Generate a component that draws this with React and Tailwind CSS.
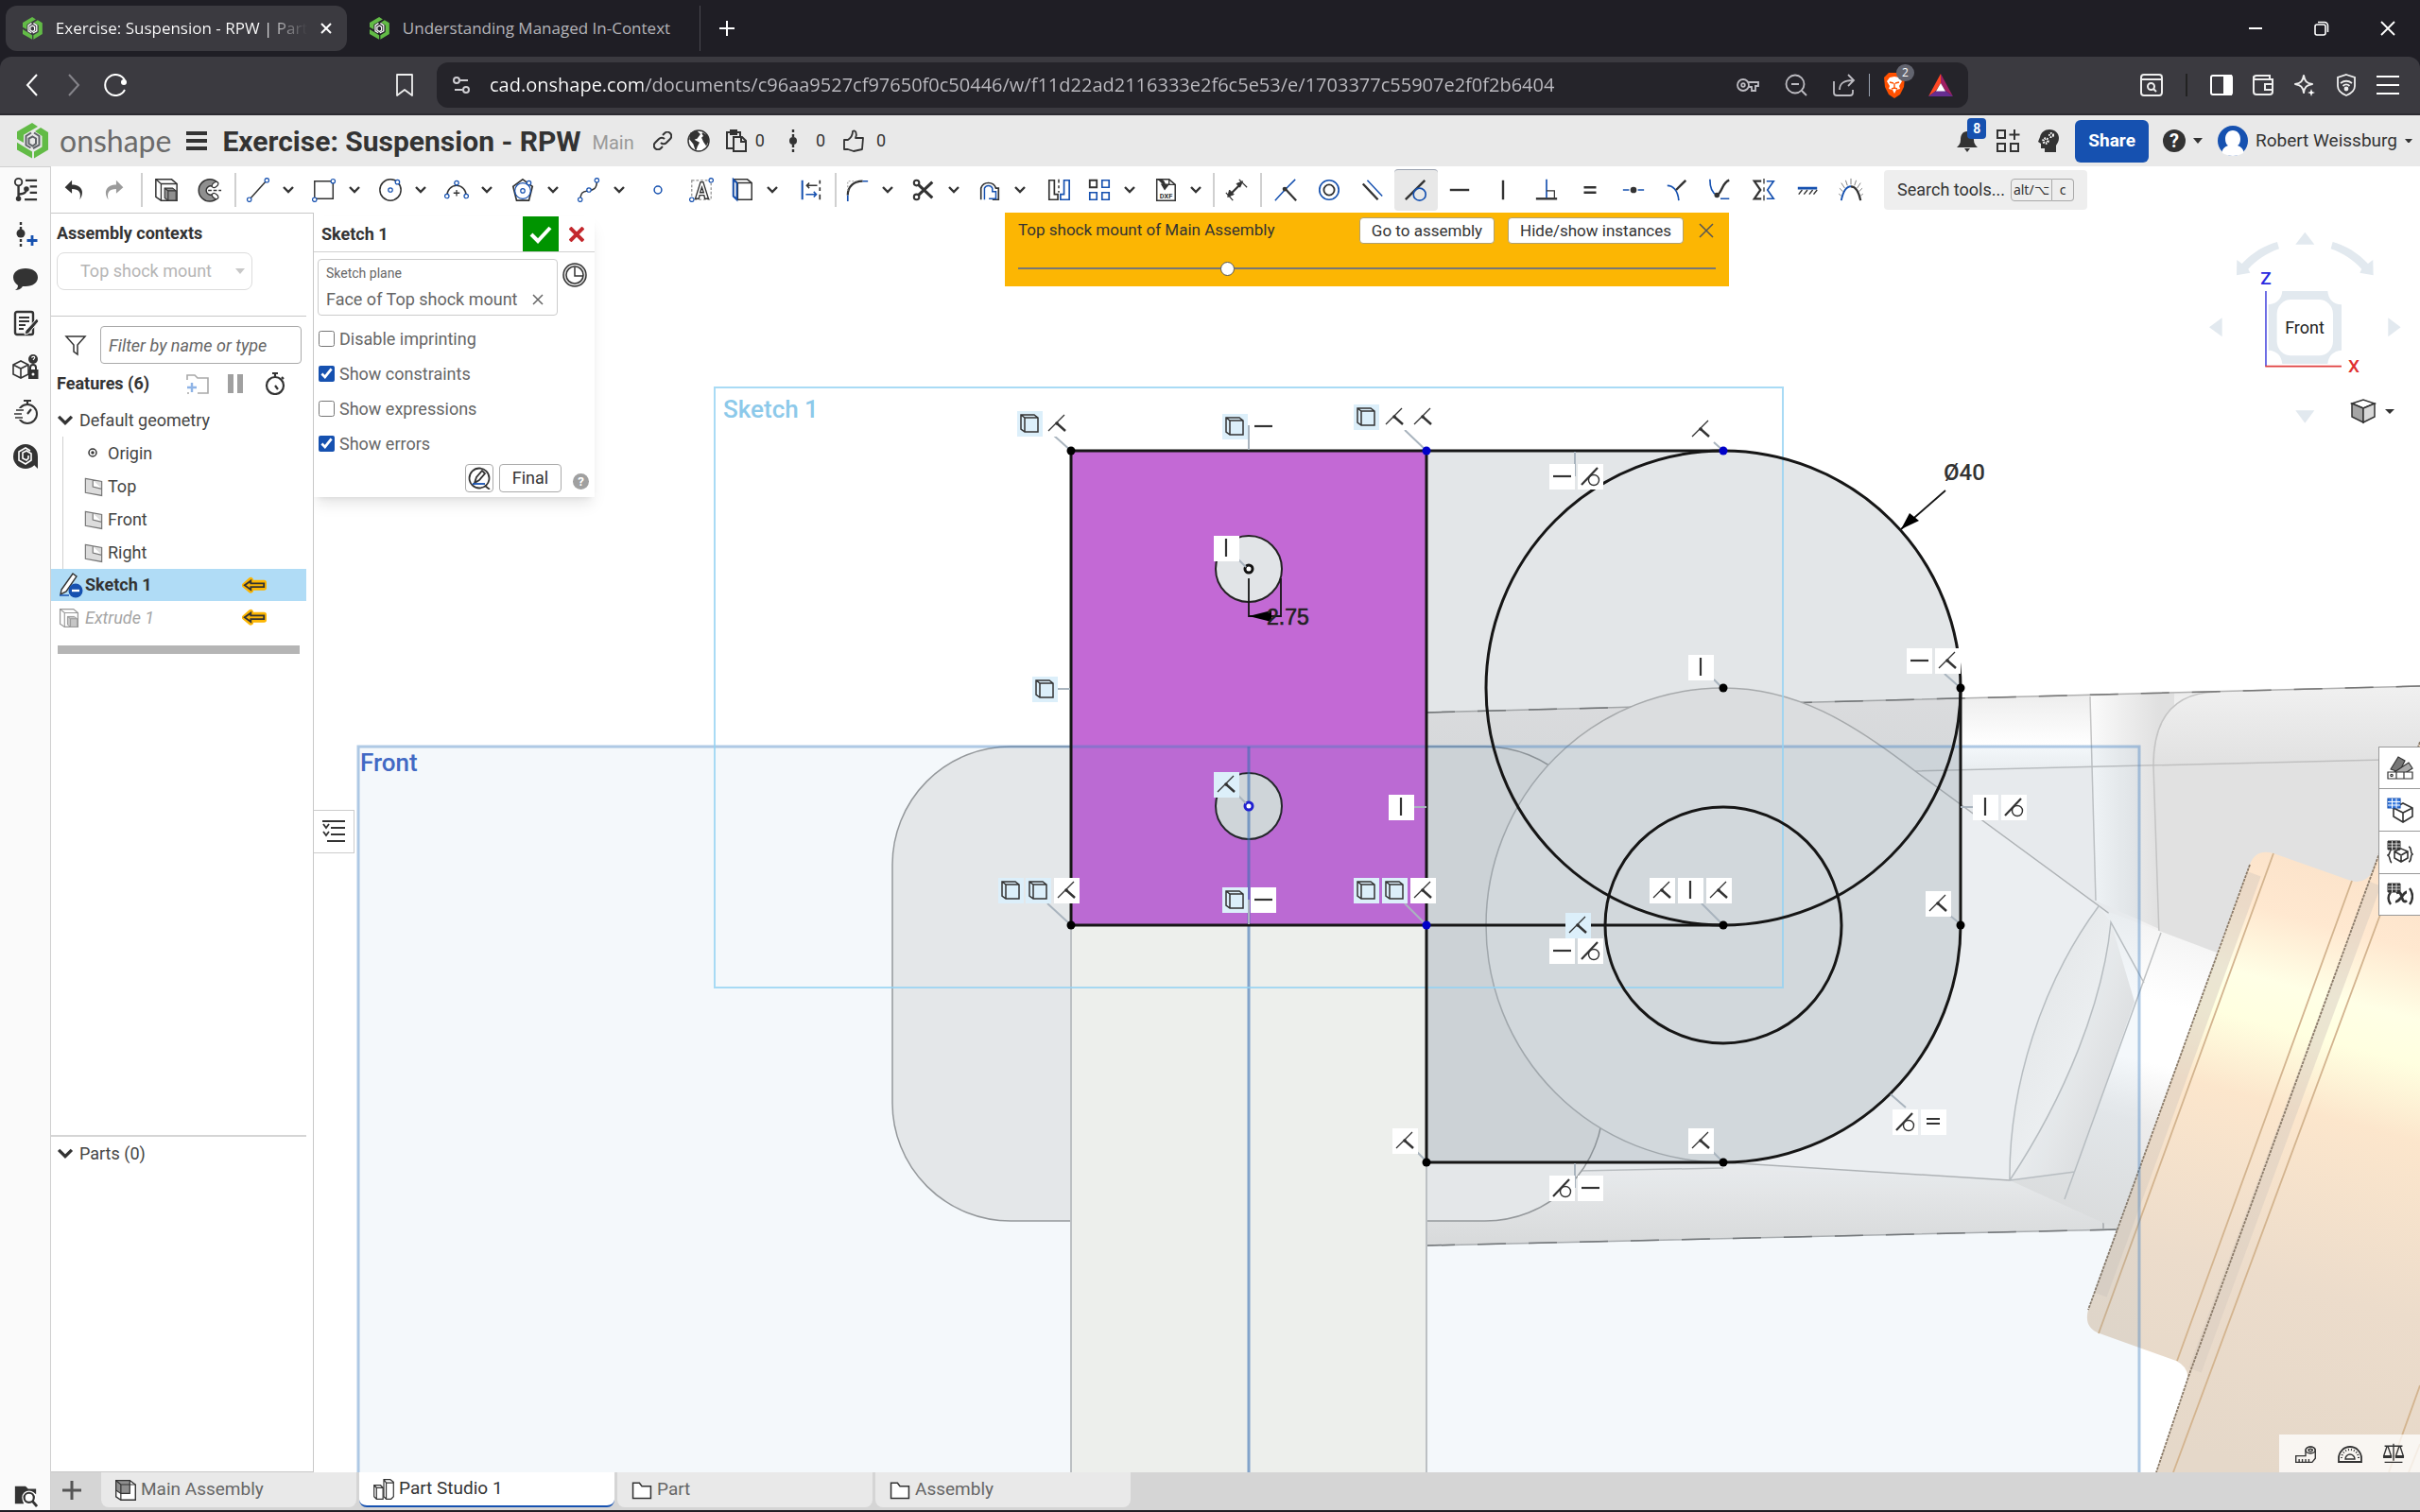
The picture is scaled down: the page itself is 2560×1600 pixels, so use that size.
const INK = '#333333';
const BLUE = '#1651b0';

/**
 * Icon frame: 28x28 drawing area shared by the toolbar and rail icons
 */
function Icon({ children, className = 'size-7', box = '0 0 28 28', color = INK, width = 2 }) {
  return (
    <svg viewBox={box} className={`${className} shrink-0`} fill="none" stroke={color} strokeWidth={width}>
      {children}
    </svg>
  );
}

/**
 * Onshape mark, used for favicons and the header logo
 */
function OnshapeMark({ className, inner = '#5f6368' }) {
  return (
    <svg viewBox="0 0 33 38" className={`${className} shrink-0`} fill="none">
      <path d="M16 0l6 4L7 12.700V21L0 17V9.300z" fill="#62bb46" />
      <path d="M0 20.700l16 9.800v7L0 28.500z" fill="#62bb46" />
      <path d="M19 9l6-4 8 5v18.500l-15 9v-7l8.500-5V14z" fill="#62bb46" />
      <path d="M15 10.500L9.500 14v9.500l5 3M18 10.500l5.500 3.500v9.500L17 27" stroke={inner} strokeWidth="2" />
      <path d="M16.500 14.500l3.500 2v5.500l-3.500 2.500-4-2.500v-5.500z" stroke={inner} strokeWidth="2" />
    </svg>
  );
}

const Chevron = ({ className = 'size-4' }) => (
  <Icon className={className} box="0 0 16 16" width={2.4}>
    <path d="M3 5l5 5 5-5" />
  </Icon>
);

const Caret = ({ className = 'w-2.5', color = INK }) => (
  <svg viewBox="0 0 10 6" className={`${className} shrink-0`} fill={color}>
    <path d="M0 0h10L5 6z" />
  </svg>
);

const Node = ({ x, y }) => <circle cx={x} cy={y} r="2.4" stroke={BLUE} strokeWidth="1.3" fill="#fff" />;

const ICONS = {
  list: (
    <>
      <circle cx="6" cy="5" r="4" />
      <path d="M6 9v15M6 19c6-1 9-1 9-7" strokeWidth="2.600" />
      <circle cx="6" cy="24" r="2" fill={INK} />
      <circle cx="15" cy="13" r="2" fill={INK} />
      <path d="M14 3h13M19 10h8M19 17h8M13 25h14" strokeWidth="2.400" />
    </>
  ),
  undo: <path d="M9 3L1 11l8 7v-5c8 0 11 4 9 12 6-9 2-17-9-17z" fill={INK} stroke="none" transform="translate(4 0)" />,
  redo: <path d="M19 3l8 8-8 7v-5c-8 0-11 4-9 12-6-9-2-17 9-17z" fill="#9b9b9b" stroke="none" transform="translate(-4 0)" />,
  extrude: (
    <>
      <path d="M2 2h18l6 5v19H8L2 22z" fill="#fff" strokeWidth="1.6" />
      <path d="M2 2l6 5h18M8 7v19" strokeWidth="1.4" />
      <path d="M12 12h9l4 3v11h-9l-4-3z" fill="#8f8f8f" strokeWidth="1.2" />
      <path d="M12 12l4 3h9M16 15v11" strokeWidth="1.2" />
    </>
  ),
  revolve: (
    <>
      <path d="M23 6a12.500 12.500 0 1 0 0 17l-6-4a5 5 0 1 1 0-9z" fill="#8f8f8f" strokeWidth="1.6" />
      <path d="M12 14.500h4M18 14.500h4M24 14.500h3" strokeWidth="1.6" />
      <ellipse cx="20" cy="8" rx="2.500" ry="4" transform="rotate(50 20 8)" fill="#fff" strokeWidth="1.3" />
      <ellipse cx="20" cy="21" rx="2.500" ry="4" transform="rotate(-50 20 21)" fill="#fff" strokeWidth="1.3" />
    </>
  ),
  line: (
    <>
      <path d="M5 24L23 4" strokeWidth="1.6" />
      <Node x={4} y={25} />
      <Node x={24} y={3} />
    </>
  ),
  rect: (
    <>
      <path d="M3 4h21v20H3z" strokeWidth="1.6" />
      <Node x={3} y={25} />
      <Node x={24} y={4} />
    </>
  ),
  circle: (
    <>
      <circle cx="14" cy="14" r="12" strokeWidth="1.6" />
      <Node x={14} y={14} />
      <Node x={22} y={5} />
    </>
  ),
  arc: (
    <>
      <path d="M3 21a11 12 0 0 1 22 0" strokeWidth="1.6" />
      <path d="M14 14v7M10.500 17.500h7" strokeWidth="1.4" />
      <Node x={3} y={21} />
      <Node x={14} y={6} />
      <Node x={25} y={21} />
    </>
  ),
  polygon: (
    <>
      <path d="M14 2l11 8-4 16H7L3 10z" strokeWidth="1.8" />
      <circle cx="14" cy="15" r="9" stroke={BLUE} strokeWidth="1.3" />
      <Node x={14} y={15} />
      <Node x={21} y={6} />
    </>
  ),
  spline: (
    <>
      <path d="M4 25c1-9 3-9 9-10s10-2 10-11" strokeWidth="1.6" />
      <Node x={4} y={25} />
      <Node x={14} y={14} />
      <Node x={23} y={3} />
    </>
  ),
  point: <circle cx="14" cy="14" r="4.200" stroke={BLUE} strokeWidth="1.6" />,
  text: (
    <>
      <path d="M3 3h22v22H3z" stroke="#8f8f8f" strokeWidth="1.3" strokeDasharray="3 2" />
      <path d="M13 5h3l6 19h-4l-1-4h-5l-1 4H7zM14.500 11l-2 6h4z" fill="#fff" strokeWidth="1.5" />
      <Node x={3} y={25} />
      <Node x={25} y={3} />
    </>
  ),
  project: (
    <>
      <path d="M4 2h16l5 4v19H9l-5-4z" strokeWidth="1.6" />
      <path d="M4 2l5 4h16M9 6v19" strokeWidth="1.6" />
      <path d="M4 2v19l4 4V6z" stroke={BLUE} strokeWidth="2" />
    </>
  ),
  construction: (
    <>
      <path d="M4 3v22" stroke={BLUE} strokeWidth="2.200" />
      <path d="M24 3v4M24 11v4M24 19v6" strokeWidth="1.8" />
      <path d="M9 9h12M12 6L9 9l3 3" strokeWidth="1.6" />
      <path d="M8 19h12M17 16l3 3-3 3" stroke={BLUE} strokeWidth="1.6" />
    </>
  ),
  fillet: (
    <>
      <path d="M3 20C3 10 10 4 20 4" strokeWidth="2.400" />
      <path d="M3 20v7M20 4h6" stroke={BLUE} strokeWidth="1.8" />
      <path d="M3 15V4h11" stroke="#9b9b9b" strokeWidth="1.2" strokeDasharray="2 2" />
    </>
  ),
  trim: (
    <>
      <circle cx="6" cy="6" r="3" strokeWidth="2.200" />
      <circle cx="6" cy="22" r="3" strokeWidth="2.200" />
      <path d="M8 8l16 15M8 20L24 5" strokeWidth="3.400" />
    </>
  ),
  offset: (
    <>
      <path d="M4 25V12a9 9 0 0 1 17 0h3v13h-7" strokeWidth="1.8" />
      <path d="M8 25V12a5 5 0 0 1 9 0v4h4v8h-8" stroke={BLUE} strokeWidth="1.6" />
    </>
  ),
  mirror: (
    <>
      <path d="M3 3h6v16h4v6H3z" strokeWidth="1.8" />
      <path d="M14 2v4M14 9v3M14 15v2" strokeWidth="1.6" />
      <path d="M26 3h-6v16h-4v6h10z" stroke={BLUE} strokeWidth="1.8" />
    </>
  ),
  pattern: (
    <>
      <path d="M3 3h8v8H3z" />
      <path d="M17 3h8v8h-8zM3 17h8v8H3zM17 17h8v8h-8z" stroke={BLUE} strokeWidth="1.8" />
    </>
  ),
  dxf: (
    <>
      <path d="M4 2h14l7 6v18H4z" strokeWidth="1.6" />
      <path d="M18 2v6h7" strokeWidth="1.4" />
      <path d="M5 2c6 0 8 2 8 8M10 8l3 5 4-5z" strokeWidth="1.800" fill={INK} />
      <text x="14.500" y="24" fontSize="8" fontWeight="700" textAnchor="middle" fill={INK} stroke="none">DXF</text>
    </>
  ),
  dimension: (
    <>
      <path d="M6 20L19 7" strokeWidth="2.400" />
      <path d="M21 4l-7 3 4 4zM4 22l2-8 5 5z" fill={INK} strokeWidth="1" />
      <path d="M17 2l9 9M2 17l8 9" strokeWidth="1.3" />
    </>
  ),
  coincident: (
    <>
      <path d="M2 26l11-12L25 2" stroke={BLUE} strokeWidth="1.6" />
      <path d="M13 12l13 14" strokeWidth="2.400" />
      <circle cx="13" cy="13" r="2.600" fill={INK} stroke="none" />
    </>
  ),
  concentric: (
    <>
      <circle cx="14" cy="14" r="11" stroke={BLUE} strokeWidth="1.8" />
      <circle cx="14" cy="14" r="6" />
    </>
  ),
  parallel: (
    <>
      <path d="M3 7l17 18" strokeWidth="2.600" />
      <path d="M8 3l17 18" stroke={BLUE} strokeWidth="1.6" />
    </>
  ),
  tangent: (
    <>
      <path d="M2 25L24 3" strokeWidth="2.600" />
      <circle cx="18" cy="19" r="7" stroke={BLUE} strokeWidth="1.8" />
    </>
  ),
  horizontal: <path d="M3 14h22" strokeWidth="2.600" />,
  vertical: <path d="M14 3v22" strokeWidth="2.600" />,
  perpendicular: (
    <>
      <path d="M2 24h24" strokeWidth="2.600" />
      <path d="M14 2v21" stroke={BLUE} strokeWidth="1.8" />
      <path d="M14 15h9v8" strokeWidth="1.300" />
    </>
  ),
  equal: <path d="M7 11h14M7 17h14" strokeWidth="2.600" />,
  midpoint: (
    <>
      <path d="M2 14h7M19 14h7" stroke={BLUE} strokeWidth="1.800" />
      <circle cx="14" cy="14" r="3.600" fill={INK} stroke="none" />
    </>
  ),
  normal: (
    <>
      <path d="M3 9c6 0 12 5 13 17" stroke={BLUE} strokeWidth="1.800" />
      <path d="M13 14L24 3" strokeWidth="2.600" />
    </>
  ),
  pierce: (
    <>
      <path d="M2 2c0 10 3 16 8 18M14 24h10" stroke={BLUE} strokeWidth="1.800" />
      <path d="M10 20c6-3 6-15 14-17" strokeWidth="2.600" />
      <circle cx="10" cy="20" r="3" fill={INK} stroke="none" />
    </>
  ),
  symmetric: (
    <>
      <path d="M11 4H3l7 10-7 10h8" strokeWidth="2.400" />
      <path d="M14 1v6M14 11v5M14 20v6" strokeWidth="1.400" />
      <path d="M17 4h8l-7 10 7 10h-8" stroke={BLUE} strokeWidth="1.800" />
    </>
  ),
  fix: (
    <>
      <path d="M3 12h22" stroke={BLUE} strokeWidth="3" />
      <path d="M8 14l-4 5M14 14l-4 5M20 14l-4 5M25 14l-4 5" strokeWidth="1.500" />
    </>
  ),
  curvature: (
    <>
      <path d="M3 26C5 16 9 10 14 10" stroke={BLUE} strokeWidth="2" />
      <path d="M14 10c5 0 9 6 11 16" strokeWidth="2.400" />
      <path d="M14 8V1M10 9L8 3M18 9l2-6M7 12L3 6M21 12l4-6M5 16l-4-4M23 16l4-4M3 21l-3-3M25 21l3-3" stroke="#777" strokeWidth="1" />
    </>
  ),
  versionAdd: (
    <>
      <path d="M9 1v3M9 6v3M9 19v3M9 24v3" strokeWidth="2.400" />
      <circle cx="9" cy="13" r="4.500" fill={INK} stroke="none" />
      <path d="M21 15v11M15.500 20.500h11" stroke={BLUE} strokeWidth="2.800" />
    </>
  ),
  comment: <path d="M14 3c8 0 13 4 13 9.500S22 22 14 22h-3c-2 3-5 4-8 4 2-1 3-3 3-5-3-2-5-5-5-8.500C1 7 6 3 14 3z" fill={INK} stroke="none" />,
  note: (
    <>
      <rect x="3" y="2" width="19" height="24" rx="2" strokeWidth="2.400" />
      <path d="M7 8h11M7 12h11M7 16h7M7 20h5" />
      <path d="M26 9L14 22l-1 4 4-1 11-13z" fill={INK} stroke="#fafafa" strokeWidth="1" />
    </>
  ),
  lockedPart: (
    <>
      <path d="M1 11l8-4 8 4v10l-8 4-8-4zM1 11l8 4 8-4M9 15v10" strokeWidth="1.600" />
      <circle cx="22" cy="5" r="5" fill={INK} stroke="none" />
      <path d="M20.500 3.500c1-2 4-1 3 .5l-1.500 2" stroke="#fff" strokeWidth="1.200" />
      <path d="M19 17v-3a3 3 0 0 1 6 0v3" />
      <path d="M17 16h10.500v10H17z" fill={INK} stroke="none" />
      <circle cx="22" cy="21" r="1.500" fill="#fff" stroke="none" />
    </>
  ),
  stopwatchFast: (
    <>
      <circle cx="16" cy="16" r="10" />
      <path d="M12 2h8M16 2v4M16 16l4-5" strokeWidth="2.200" />
      <path d="M2 12h10M0 16h10M2 20h10" stroke="#fafafa" strokeWidth="4" />
      <path d="M4 12h8M2 16h8M3 20h8" strokeWidth="1.300" />
    </>
  ),
  assistant: (
    <>
      <circle cx="14" cy="14" r="13" fill={INK} stroke="none" />
      <path d="M20 20l7 7V14z" fill={INK} stroke="none" />
      <path d="M19 8l-5-3-7 4v9l7 4 6-4v-7l-5-3-4 2v6l4 2 2-2v-3" stroke="#fff" strokeWidth="1.600" />
    </>
  ),
  searchTab: (
    <>
      <path d="M2 3h12l3 3h9v6a9 9 0 0 0-14 11H2z" fill={INK} stroke="none" />
      <circle cx="18" cy="16" r="6.500" fill="#fff" stroke="#fff" strokeWidth="3" />
      <circle cx="18" cy="16" r="5.500" strokeWidth="2.400" />
      <path d="M22 20l5 6" strokeWidth="3" />
    </>
  ),
  folder: <path d="M3 5h8l3 4h11v15H3z" strokeWidth="1.800" fill="#fff" />,
  assembly: (
    <>
      <path d="M2 2h17l7 5v19H8l-6-4z" fill="#fff" strokeWidth="1.600" />
      <path d="M2 2h17v16H8l-6-4z" fill="#8f8f8f" strokeWidth="1.400" />
      <path d="M2 2l6 5h18M8 7v19" strokeWidth="1.400" />
    </>
  ),
  partStudio: (
    <>
      <path d="M2 9h8l3 3v14H5l-3-3zM2 9l3 3h8M5 12v14" strokeWidth="1.400" />
      <path d="M14 2h8l4 3v18l-3 3h-6l-3-3zM14 2l3 4h9M17 6v20" strokeWidth="1.400" />
    </>
  ),
  plane: <path d="M3 3l22 4v19L3 22zM13 5v9l12 3" fill="#dcdcdc" stroke="#777" strokeWidth="1.500" />,
};

/* Sketch toolbar, in display order. menu = has a drop-down next to it */
const TOOL_GROUPS = [
  [
    { icon: 'line', label: 'Line', menu: true },
    { icon: 'rect', label: 'Rectangle', menu: true },
    { icon: 'circle', label: 'Circle', menu: true },
    { icon: 'arc', label: 'Arc', menu: true },
    { icon: 'polygon', label: 'Polygon', menu: true },
    { icon: 'spline', label: 'Spline', menu: true },
    { icon: 'point', label: 'Point' },
    { icon: 'text', label: 'Text' },
    { icon: 'project', label: 'Use', menu: true },
    { icon: 'construction', label: 'Construction' },
  ],
  [
    { icon: 'fillet', label: 'Fillet', menu: true },
    { icon: 'trim', label: 'Trim', menu: true },
    { icon: 'offset', label: 'Offset', menu: true },
    { icon: 'mirror', label: 'Mirror' },
    { icon: 'pattern', label: 'Pattern', menu: true },
    { icon: 'dxf', label: 'Insert DXF', menu: true },
  ],
  [{ icon: 'dimension', label: 'Dimension' }],
  [
    { icon: 'coincident', label: 'Coincident' },
    { icon: 'concentric', label: 'Concentric' },
    { icon: 'parallel', label: 'Parallel' },
    { icon: 'tangent', label: 'Tangent', active: true },
    { icon: 'horizontal', label: 'Horizontal' },
    { icon: 'vertical', label: 'Vertical' },
    { icon: 'perpendicular', label: 'Perpendicular' },
    { icon: 'equal', label: 'Equal' },
    { icon: 'midpoint', label: 'Midpoint' },
    { icon: 'normal', label: 'Normal' },
    { icon: 'pierce', label: 'Pierce' },
    { icon: 'symmetric', label: 'Symmetric' },
    { icon: 'fix', label: 'Fix' },
    { icon: 'curvature', label: 'Curvature' },
  ],
];

function ToolButton({ tool }) {
  return (
    <>
      <button
        aria-label={tool.label}
        className={`flex h-11 shrink-0 items-center justify-center rounded ${tool.menu ? 'w-10' : 'w-[46px]'} ${
          tool.active ? 'border-t border-gray-400 bg-[#e8e8e8]' : ''
        }`}
      >
        <Icon className="size-[26px]">{ICONS[tool.icon]}</Icon>
      </button>
      {tool.menu && (
        <button aria-label={`${tool.label} options`} className="flex h-11 w-[30px] shrink-0 items-center pl-1">
          <Chevron />
        </button>
      )}
    </>
  );
}

const Divider = ({ className = 'mx-0.5' }) => <div className={`${className} h-9 w-0.5 shrink-0 bg-[#d0d0d0]`} />;

/**
 * Browser window: tab strip
 */
function TabStrip() {
  return (
    <div className="flex h-[60px] items-center bg-[#1f1e25] pl-1.5 text-[17px] text-white">
      <button className="flex h-12 w-[361px] items-center rounded-xl bg-[#3b3a40] pr-3.5 pl-[18px]">
        <OnshapeMark className="h-6" inner="#ffffff" />
        <span className="ml-3.5 flex-1 bg-[linear-gradient(90deg,#fff_82%,#3b3a40)] bg-clip-text text-left whitespace-nowrap text-transparent">
          Exercise: Suspension - RPW | Part
        </span>
        <Icon className="ml-3 size-4" box="0 0 16 16" color="#fff">
          <path d="M3 3l10 10M13 3L3 13" />
        </Icon>
      </button>
      <button className="ml-6 flex h-12 w-[350px] items-center border-r border-[#4a4950]">
        <OnshapeMark className="h-6" inner="#ffffff" />
        <span className="mx-3.5 flex-1 text-left whitespace-nowrap text-[#b5b4b9]">
          Understanding Managed In-Context
        </span>
      </button>
      <button aria-label="New tab" className="ml-5">
        <Icon className="size-4" box="0 0 16 16" color="#fff">
          <path d="M8 0v16M0 8h16" />
        </Icon>
      </button>
      <div className="ml-auto flex items-center gap-[54px] pr-[26px]">
        <button aria-label="Minimize">
          <Icon className="size-4" box="0 0 16 16" color="#fff">
            <path d="M1 8h14" />
          </Icon>
        </button>
        <button aria-label="Restore">
          <Icon className="size-4" box="0 0 16 16" color="#fff" width={1.6}>
            <rect x="1" y="4" width="11" height="11" rx="2" />
            <path d="M4 1.500h7a3.500 3.500 0 0 1 3.500 3.500v7" />
          </Icon>
        </button>
        <button aria-label="Close window">
          <Icon className="size-4" box="0 0 16 16" color="#fff" width={1.8}>
            <path d="M1 1l14 14M15 1L1 15" />
          </Icon>
        </button>
      </div>
    </div>
  );
}

/**
 * Browser window: navigation and address
 */
function AddressBar() {
  return (
    <div className="bg-[#1f1e25]">
      <div className="flex h-[62px] items-center rounded-t-xl border-b-2 border-[#2c2b31] bg-[#3b3a40] pr-[22px] pl-[22px]">
        <button aria-label="Back">
          <Icon className="size-6" box="0 0 24 24" color="#fff">
            <path d="M17 1L7 12l10 11" />
          </Icon>
        </button>
        <button aria-label="Forward" className="ml-5">
          <Icon className="size-6" box="0 0 24 24" color="#85848a">
            <path d="M7 1l10 11L7 23" />
          </Icon>
        </button>
        <button aria-label="Reload" className="ml-5">
          <Icon className="size-6" box="0 0 24 24" color="#fff">
            <path d="M22 7A11 11 0 1 0 22 17" />
            <circle cx="21" cy="9" r="3" fill="#fff" stroke="none" />
          </Icon>
        </button>
        <button aria-label="Bookmark" className="ml-[282px]">
          <Icon className="size-6" box="0 0 24 24" color="#eee" width={1.800}>
            <path d="M4 1h16v22l-8-6-8 6z" strokeLinejoin="round" />
          </Icon>
        </button>
        <div className="ml-[22px] flex h-12 w-[1620px] shrink items-center rounded-xl bg-[#25242a] px-4 text-gray-300">
          <Icon className="size-5" box="0 0 20 20" color="#cfced3">
            <circle cx="5" cy="5" r="3" />
            <path d="M9 5h8M3 15h8" />
            <circle cx="15" cy="15" r="3" />
          </Icon>
          <input
            aria-label="Address"
            readOnly
            className="ml-5 min-w-0 flex-1 bg-[linear-gradient(90deg,#ffffff_162px,#bdbcc2_162px)] bg-clip-text font-['Open_Sans',sans-serif] text-[20px] text-transparent"
            value="cad.onshape.com/documents/c96aa9527cf97650f0c50446/w/f11d22ad2116333e2f6c5e53/e/1703377c55907e2f0f2b6404"
          />
          <div className="flex items-center gap-[27px]">
            <Icon className="size-6" box="0 0 24 24" color="#bdbcc2" width={1.800}>
              <circle cx="7" cy="12" r="6" />
              <circle cx="7" cy="12" r="1.800" />
              <path d="M12 9h11v4h-3v5h-4v-4h-4" />
            </Icon>
            <Icon className="size-6" box="0 0 24 24" color="#bdbcc2" width={1.800}>
              <circle cx="11" cy="11" r="9.500" />
              <path d="M18 18l5 5M7 11h8" />
            </Icon>
            <Icon className="size-6" box="0 0 24 24" color="#bdbcc2" width={1.800}>
              <path d="M1 8v12a3 3 0 0 0 3 3h14a3 3 0 0 0 3-3v-3" />
              <path d="M7 17C7 10 12 7 21 7M16 1l6 6-6 6" />
            </Icon>
          </div>
          <div className="mx-3.5 h-6 w-px bg-gray-400" />
          <div className="relative">
            <svg viewBox="0 0 24 28" className="h-7" fill="none">
              <path d="M6 1h12l5 5-1 10-4 8-6 4-6-4-4-8L1 6z" fill="#ff5000" />
              <path d="M7 6l5-1 5 1 3 4-3 5 1 3-4 1-2 4-2-4-4-1 1-3-3-5z" fill="#fff" />
              <path d="M7 11l4 1M17 11l-4 1M12 12v5M9 18l3-1 3 1" stroke="#ff5000" strokeWidth="1.400" />
            </svg>
            <span className="absolute -top-2 left-3.5 rounded-full bg-[#62646f] px-1.5 text-xs leading-[18px] text-white">2</span>
          </div>
          <svg viewBox="0 0 26 24" className="ml-6 h-6">
            <path d="M13 0v10L8 18 0 24z" fill="#ff4724" />
            <path d="M13 0l13 24-8-6-5-8z" fill="#9e1f63" />
            <path d="M0 24l8-6h10l8 6z" fill="#662d91" />
            <path d="M13 10l5 8.500H8z" fill="#fff" />
          </svg>
        </div>
        <div className="ml-auto flex items-center gap-5">
          <Icon className="size-6" box="0 0 24 24" color="#eee">
            <rect x="1" y="1" width="22" height="22" rx="3" />
            <path d="M1 6h22" />
            <circle cx="11.500" cy="13.500" r="3.500" />
            <path d="M14 16l3 3" />
          </Icon>
          <div className="mr-1 ml-1 h-6 w-0.5 bg-[#222]" />
          <Icon className="size-6" box="0 0 24 24" color="#fff">
            <rect x="1" y="2" width="22" height="20" rx="2" />
            <path d="M15 2h7v20h-7z" fill="#fff" />
          </Icon>
          <Icon className="size-6" box="0 0 24 24" color="#eee">
            <path d="M2 5a3 3 0 0 1 3-3h14v4M2 5v14a3 3 0 0 0 3 3h14a3 3 0 0 0 3-3V6H5a3 3 0 0 1-3-1zM22 11h-8v6h8" />
          </Icon>
          <Icon className="size-6" box="0 0 24 24" color="#eee">
            <path d="M11 2c1 6 3 8 9 9-6 1-8 3-9 9-1-6-3-8-9-9 6-1 8-3 9-9z" strokeLinejoin="round" />
            <path d="M19 16l1 3 3 1-3 1-1 3-1-3-3-1 3-1z" fill="#fff" stroke="none" />
          </Icon>
          <Icon className="size-6" box="0 0 24 24" color="#eee" width={1.800}>
            <path d="M12 1l9 3v9c0 5-4 8-9 10-5-2-9-5-9-10V4z" />
            <path d="M6 10c4-3 8-3 12 0M8.500 13c2-2 5-2 7 0" />
            <circle cx="12" cy="16" r="1.500" fill="#fff" />
          </Icon>
          <Icon className="size-6" box="0 0 24 24" color="#fff">
            <path d="M0 3h24M0 12h24M0 21h24" />
          </Icon>
        </div>
      </div>
    </div>
  );
}

/**
 * Document header
 */
function DocumentHeader() {
  return (
    <header className="flex h-[54px] items-center bg-[#e9e9e9] pr-2 pl-[18px] text-[#333]">
      <a href="#home" className="flex items-center">
        <OnshapeMark className="h-[38px]" />
        <span className="ml-3 font-[Lato,sans-serif] text-[32px] leading-9 text-[#6b6b6b]">onshape</span>
      </a>
      <button aria-label="Menu" className="ml-4">
        <Icon className="size-[22px]" box="0 0 22 22" width={4}>
          <path d="M0 3h22M0 11h22M0 19h22" />
        </Icon>
      </button>
      <h1 className="ml-4 text-[30px] font-bold">Exercise: Suspension - RPW</h1>
      <span className="mt-1 ml-3 text-[20px] text-[#999]">Main</span>
      <div className="ml-5 flex items-center text-lg">
        <Icon className="size-5" box="0 0 20 20">
          <path d="M8 12a4 4 0 0 0 6 0l4-4a4 4 0 0 0-6-6l-2 2M12 8a4 4 0 0 0-6 0l-4 4a4 4 0 0 0 6 6l2-2" />
        </Icon>
        <Icon className="ml-4 size-6" box="0 0 24 24" width={1.500}>
          <circle cx="12" cy="12" r="11" fill="#fff" />
          <path d="M4 4l6-2 3 3-3 4-3 1 1 2 4 2-2 4-1 3-2-6-4-5zM16 4l5 3 1 5-2 4-2-3-2-4 2-2z" fill={INK} />
        </Icon>
        <Icon className="ml-4 size-6" box="0 0 24 24">
          <path d="M8 20H2V3h14v4M6 1h6v4H6z" />
          <path d="M9 8h9l4 4v11H9zM17 8v5h5" />
        </Icon>
        <span className="ml-2">0</span>
        <Icon className="ml-[18px] size-6" box="0 0 24 24" width={2.400}>
          <path d="M12 0v3M12 5v3M12 16v3M12 21v3" />
          <circle cx="12" cy="12" r="4" fill={INK} stroke="none" />
        </Icon>
        <span className="ml-3">0</span>
        <Icon className="ml-[18px] size-6" box="0 0 24 24" width={1.800}>
          <path d="M2 11h4c3-2 5-5 5-9 3-2 5 2 3 7h8l-1 12-9 2-6-2H2z" strokeLinejoin="round" />
        </Icon>
        <span className="ml-3">0</span>
      </div>
      <div className="ml-auto flex items-center">
        <button aria-label="Notifications, 8 new" className="relative">
          <Icon className="size-6" box="0 0 24 24">
            <path d="M12 2c5 0 7 4 7 9 0 4 2 6 4 8H1c2-2 4-4 4-8 0-5 2-9 7-9zM9 20h6l-3 4z" fill={INK} stroke="none" />
          </Icon>
          <span className="absolute -top-3 left-3 rounded bg-[#1651b0] px-1.5 text-sm leading-[22px] font-bold text-white">8</span>
        </button>
        <button aria-label="App store" className="ml-[18px]">
          <Icon className="size-[26px]" box="0 0 26 26">
            <path d="M2 2h8v8H2zM2 16h8v8H2zM16 16h8v8h-8zM20 1v11M14.500 6.500h11" />
          </Icon>
        </button>
        <button aria-label="Learning center" className="ml-[18px]">
          <Icon className="size-6" box="0 0 24 24">
            <path d="M13 0c6 0 10 4 10 9 0 4-2 6-3 8v7H8v-4H4v-5l-3-2 2-5C4 3 8 0 13 0z" fill={INK} stroke="none" />
            <circle cx="9" cy="12" r="2.500" stroke="#fff" strokeDasharray="1.500 1" strokeWidth="2.500" />
            <circle cx="15" cy="6" r="2" stroke="#fff" strokeDasharray="1.500 1" />
          </Icon>
        </button>
        <button className="ml-4 h-[45px] rounded-md bg-[#1651b0] px-3.5 text-[19px] font-bold text-white">Share</button>
        <button aria-label="Help" className="ml-[15px] flex items-center gap-2">
          <svg viewBox="0 0 24 24" className="size-6">
            <circle cx="12" cy="12" r="12" fill={INK} />
            <text x="12" y="19" fontSize="20" fontWeight="700" textAnchor="middle" fill="#fff">?</text>
          </svg>
          <Caret />
        </button>
        <button className="ml-4 flex items-center gap-2 text-[19px]">
          <svg viewBox="0 0 32 32" className="size-8">
            <circle cx="16" cy="16" r="16" fill={BLUE} />
            <path d="M16 5c5 0 8 4 8 9 0 3-1 6-3 7 5 2 7 5 6 8-6 4-16 4-22 0-1-3 1-6 6-8-2-1-3-4-3-7 0-5 3-9 8-9z" fill="#fff" />
          </svg>
          Robert Weissburg
          <Caret className="w-2" />
        </button>
      </div>
    </header>
  );
}

function Toolbar() {
  return (
    <div className="flex h-[49px] items-center bg-white pl-px">
      <button aria-label="Undo" className="flex w-11 justify-center">
        <Icon className="size-[26px]">{ICONS.undo}</Icon>
      </button>
      <button aria-label="Redo" className="mr-0.5 flex w-[46px] justify-center">
        <Icon className="size-[26px]">{ICONS.redo}</Icon>
      </button>
      <Divider />
      <ToolButton tool={{ icon: 'extrude', label: 'Extrude' }} />
      <ToolButton tool={{ icon: 'revolve', label: 'Revolve' }} />
      {TOOL_GROUPS.map((group, idx) => (
        <div key={idx} className="flex items-center">
          <Divider className={idx === 0 ? 'mx-[3px]' : idx === 2 ? 'mx-0' : 'mx-0.5'} />
          {group.map((tool) => (
            <ToolButton key={tool.icon} tool={tool} />
          ))}
        </div>
      ))}
      <button className="ml-3 flex h-[42px] shrink-0 items-center rounded bg-[#eeeeee] px-3.5 text-lg text-[#333]">
        Search tools...
        <kbd className="ml-1.5 rounded-l-sm border border-[#aaa] px-0.5 font-sans text-sm leading-[22px]">alt/⌥</kbd>
        <kbd className="rounded-r-sm border border-l-0 border-[#aaa] px-2 font-sans text-sm leading-[22px]">c</kbd>
      </button>
    </div>
  );
}

const RAIL = [
  ['versionAdd', 'Create version'],
  ['comment', 'Comments'],
  ['note', 'Notes'],
  ['lockedPart', 'Part permissions'],
  ['stopwatchFast', 'Performance'],
  ['assistant', 'Assistant'],
];

function Rail() {
  return (
    <nav className="flex w-[54px] shrink-0 flex-col items-center border-t border-r border-[#d0d0d0] bg-[#fafafa]">
      <button aria-label="Feature list" className="flex h-[47px] items-center">
        <Icon className="size-[26px]">{ICONS.list}</Icon>
      </button>
      {RAIL.map(([icon, label]) => (
        <button key={icon} aria-label={label} className="flex h-[47px] items-center">
          <Icon>{ICONS[icon]}</Icon>
        </button>
      ))}
      <button aria-label="Tab manager" className="mt-auto mb-0.5">
        <Icon className="size-[26px]">{ICONS.searchTab}</Icon>
      </button>
    </nav>
  );
}

const ContextArrow = () => (
  <svg viewBox="0 0 28 20" className="mr-[42px] ml-auto w-[26px]">
    <path d="M3 10l7-6v3h15v6H10v3z" fill="#333" stroke="#fcb603" strokeWidth="6" strokeLinejoin="round" />
    <path d="M3 10l7-5v3h15v4H10v3z" fill="#fcb603" stroke="#333" strokeWidth="2" />
  </svg>
);

/**
 * Feature list of the part studio
 */
function FeaturePanel() {
  return (
    <aside className="flex w-[278px] shrink-0 flex-col border-t border-r border-b border-[#c8c8c8] bg-white text-lg text-[#444]">
      <h2 className="flex h-[41px] items-center pl-1.5 font-bold text-[#333]">Assembly contexts</h2>
      <div className="relative ml-1.5 w-[207px]">
        <select
          disabled
          aria-label="Assembly context"
          className="h-10 w-full appearance-none rounded-lg border border-[#dcdcdc] pl-6 text-[#b5b5b5] opacity-100"
        >
          <option>Top shock mount</option>
        </select>
        <Caret className="absolute top-[17px] right-2 w-2.5" color="#c8c8c8" />
      </div>
      <div className="mt-[27px] mr-[7px] h-px bg-[#c8c8c8]" />
      <div className="mt-2.5 flex items-center pr-3 pl-3.5">
        <Icon className="size-6" box="0 0 24 24" width={1.500}>
          <path d="M2 3h20l-8 9v10l-4-3v-7z" />
        </Icon>
        <input
          aria-label="Filter by name or type"
          placeholder="Filter by name or type"
          className="ml-3.5 h-10 min-w-0 flex-1 rounded border border-[#aaa] px-2 italic placeholder:text-[#666]"
        />
      </div>
      <div className="flex h-[42px] items-center pl-1.5">
        <h2 className="w-[137px] font-bold text-[#333]">Features (6)</h2>
        <button aria-label="Add folder">
          <Icon className="size-6" box="0 0 24 24" color="#a9a9a9" width={1.600}>
            <path d="M1 8V3h8l3 3h11v16H12M1 22h2" />
            <path d="M6 11v10M1 16h10" stroke="#8fb4e6" strokeWidth="2.400" />
          </Icon>
        </button>
        <button aria-label="Suspend" className="ml-5 flex gap-1">
          <span className="h-5 w-1.5 bg-[#a0a0a0]" />
          <span className="h-5 w-1.5 bg-[#a0a0a0]" />
        </button>
        <button aria-label="Regeneration times" className="ml-[22px]">
          <Icon className="size-6" box="0 0 24 24" width={2.200}>
            <circle cx="12" cy="14" r="9" />
            <path d="M9 1h6M12 1v4M12 14l3 4M19 5l2 2" />
          </Icon>
        </button>
      </div>
      <button className="flex h-[35px] items-center pl-1">
        <Chevron className="size-[22px]" />
        <span className="ml-1">Default geometry</span>
      </button>
      <ul className="ml-3 border-l border-[#d0d0d0]">
        <li className="flex h-[35px] items-center gap-1.5 pl-[21px]">
          <Icon className="size-5" box="0 0 20 20" width={1.500}>
            <circle cx="10" cy="9" r="4" />
            <circle cx="10" cy="9" r="1" />
          </Icon>
          Origin
        </li>
        {['Top', 'Front', 'Right'].map((name) => (
          <li key={name} className="flex h-[35px] items-center gap-1 pl-[21px]">
            <Icon className="size-[22px]">{ICONS.plane}</Icon>
            {name}
          </li>
        ))}
      </ul>
      <div className="mr-[7px] flex h-[34px] items-center bg-[#b0dcf6] pl-2 font-bold text-[#333]">
        <Icon className="h-7 w-[26px]" box="0 0 26 28">
          <path d="M3 19L15 2l4 3L8 21l-6 3z" fill="#fff" strokeWidth="1.400" />
          <path d="M1 25h10" stroke={BLUE} strokeWidth="1.500" />
          <circle cx="18" cy="20" r="7.500" fill={BLUE} stroke="none" />
          <path d="M14 20h8" stroke="#fff" strokeWidth="2.400" />
        </Icon>
        <span className="ml-0.5">Sketch 1</span>
        <ContextArrow />
      </div>
      <div className="mr-[7px] flex h-[35px] items-center pl-2 text-[#a5a5a5] italic">
        <Icon className="mr-1.5 size-[22px] opacity-50">{ICONS.extrude}</Icon>
        <span>Extrude 1</span>
        <ContextArrow />
      </div>
      <div className="mt-3 mr-3.5 ml-[7px] h-[9px] bg-[#b5b5b5]" />
      <div className="mt-auto mr-[7px] h-[356px] border-t-2 border-[#d5d5d5]">
        <button className="flex h-[35px] items-center pl-1">
          <Chevron className="size-[22px]" />
          <span className="ml-1">Parts (0)</span>
        </button>
      </div>
    </aside>
  );
}

const OPTIONS = [
  ['Disable imprinting', false],
  ['Show constraints', true],
  ['Show expressions', false],
  ['Show errors', true],
];

/**
 * Dialog of the open sketch
 */
function SketchDialog() {
  return (
    <section className="absolute top-1 left-0 w-[297px] bg-white text-lg text-[#666] shadow-lg">
      <div className="flex h-[38px] items-center border-b border-[#d0d0d0] pl-2">
        <h2 className="flex-1 font-bold text-[#333]">Sketch 1</h2>
        <button aria-label="Accept" className="flex h-[37px] w-[38px] items-center justify-center bg-[#009400]">
          <Icon className="size-6" box="0 0 24 24" color="#fff" width={4}>
            <path d="M2 12l7 7L22 5" />
          </Icon>
        </button>
        <button aria-label="Cancel" className="flex w-[38px] justify-center">
          <Icon className="size-4" box="0 0 16 16" color="#c4282d" width={4}>
            <path d="M1 1l14 14M15 1L1 15" />
          </Icon>
        </button>
      </div>
      <div className="flex items-start pt-[7px] pl-1">
        <div className="h-[60px] w-[254px] rounded-sm border border-[#ccc] pr-3.5 pl-2">
          <p className="pt-1 text-sm leading-5">Sketch plane</p>
          <p className="flex items-center justify-between pt-1.5 leading-6">
            Face of Top shock mount
            <button aria-label="Remove plane">
              <Icon className="size-3" box="0 0 12 12" color="#666" width={1.500}>
                <path d="M1 1l10 10M11 1L1 11" />
              </Icon>
            </button>
          </p>
        </div>
        <button aria-label="Sketch history" className="mt-1 ml-[5px]">
          <Icon className="size-[26px]" box="0 0 26 26" width={1.500}>
            <circle cx="13" cy="13" r="12" fill="#ddd" />
            <circle cx="13" cy="13" r="9" fill="#fff" />
            <path d="M13 5v9h9" />
          </Icon>
        </button>
      </div>
      <div className="pt-1.5 pl-[5px]">
        {OPTIONS.map(([label, checked]) => (
          <label key={label} className="flex h-[37px] items-center gap-[5px]">
            <input type="checkbox" defaultChecked={checked} className="size-[17px] accent-[#1651b0]" />
            {label}
          </label>
        ))}
      </div>
      <div className="flex h-[38px] items-start justify-end pt-[3px] pr-1.5">
        <button aria-label="Inspect sketch" className="rounded border border-[#aaa] p-0.5">
          <Icon className="size-6" box="0 0 24 24" width={1.800}>
            <circle cx="12" cy="12" r="10.500" />
            <path d="M7 17l2-6 6-7 3 3-6 7zM18 20l5 4" />
            <path d="M5 18h13" stroke={BLUE} />
          </Icon>
        </button>
        <button className="ml-1.5 h-[30px] w-[66px] rounded border border-[#aaa] text-[#333]">Final</button>
        <svg viewBox="0 0 18 18" className="mt-2.5 ml-3 size-[17px]">
          <circle cx="9" cy="9" r="9" fill="#a0a0a0" />
          <text x="9" y="14" fontSize="14" fontWeight="700" textAnchor="middle" fill="#fff">?</text>
        </svg>
      </div>
    </section>
  );
}

function ContextBanner() {
  return (
    <section className="absolute top-0 left-[731px] h-[78px] w-[766px] bg-[#fcb603] px-3.5 text-[17px] text-[#333]">
      <div className="flex h-[37px] items-center">
        <p className="flex-1">Top shock mount of Main Assembly</p>
        <button className="h-7 rounded border border-[#b0a070] bg-white px-3 leading-6">Go to assembly</button>
        <button className="ml-3.5 h-7 rounded border border-[#b0a070] bg-white px-3 leading-6">Hide/show instances</button>
        <button aria-label="Close" className="mr-0.5 ml-4">
          <Icon className="size-4" box="0 0 16 16" color="#555" width={1.500}>
            <path d="M1 1l14 14M15 1L1 15" />
          </Icon>
        </button>
      </div>
      <input
        type="range"
        aria-label="Context transparency"
        defaultValue="29.600"
        step="0.1"
        className="mt-3.5 block h-4 w-full appearance-none bg-[linear-gradient(#777,#777)] bg-[length:100%_2px] bg-center bg-no-repeat [&::-webkit-slider-thumb]:size-[15px] [&::-webkit-slider-thumb]:appearance-none [&::-webkit-slider-thumb]:rounded-full [&::-webkit-slider-thumb]:border [&::-webkit-slider-thumb]:border-[#555] [&::-webkit-slider-thumb]:bg-white"
      />
    </section>
  );
}

/* [type, x, y, background] of the constraint markers */
const MARKERS = [
  ['cube', 1089, 448, 'b'], ['coincident', 1118, 448, 'w'],
  ['cube', 1306, 451, 'b'], ['horizontal', 1336, 451, 'w'],
  ['cube', 1445, 441, 'b'], ['coincident', 1475, 441, 'w'], ['coincident', 1505, 441, 'w'],
  ['vertical', 1297, 580, 'w'],
  ['cube', 1105, 729, 'b'],
  ['coincident', 1297, 830, 'b'],
  ['vertical', 1482, 854, 'w'],
  ['cube', 1069, 942, 'b'], ['cube', 1098, 942, 'b'], ['coincident', 1128, 942, 'w'],
  ['cube', 1306, 952, 'b'], ['horizontal', 1336, 952, 'w'],
  ['cube', 1445, 942, 'b'], ['cube', 1475, 942, 'b'], ['coincident', 1505, 942, 'w'],
  ['horizontal', 1652, 504, 'w'], ['tangent', 1682, 504, 'w'],
  ['coincident', 1799, 454, 'w'],
  ['vertical', 1799, 706, 'w'],
  ['horizontal', 2030, 699, 'w'], ['coincident', 2060, 699, 'w'],
  ['vertical', 2100, 854, 'w'], ['tangent', 2130, 854, 'w'],
  ['coincident', 2050, 956, 'w'],
  ['tangent', 2015, 1187, 'w'], ['equal', 2045, 1187, 'w'],
  ['coincident', 1758, 942, 'w'], ['vertical', 1788, 942, 'w'], ['coincident', 1818, 942, 'w'],
  ['coincident', 1669, 979, 'b'],
  ['horizontal', 1652, 1006, 'w'], ['tangent', 1682, 1006, 'w'],
  ['coincident', 1486, 1207, 'w'],
  ['coincident', 1799, 1207, 'w'],
  ['tangent', 1652, 1257, 'w'], ['horizontal', 1682, 1257, 'w'],
];

const MARKER_SHAPES = {
  cube: <path d="M-9-9H5l4 3V9H-5L-9 6zM-9-9l4 3H9M-5-6V9" strokeWidth="1.500" />,
  coincident: (
    <>
      <path d="M-9 8L8-9" strokeWidth="1.300" />
      <path d="M0 0l9 8" strokeWidth="2.400" />
      <circle r="1.800" fill={INK} stroke="none" />
    </>
  ),
  horizontal: <path d="M-9 0H10" strokeWidth="2.200" />,
  vertical: <path d="M0-10V9" strokeWidth="2.200" />,
  equal: <path d="M-7-3H7M-7 2H7" strokeWidth="2.200" />,
  tangent: (
    <>
      <path d="M-9 9L8-9" strokeWidth="2.200" />
      <circle cx="4" cy="4" r="5.500" strokeWidth="1.400" />
    </>
  ),
};

const POINTS = [
  [1133, 477, '#000'], [1509, 477, '#0000c8'], [1823, 477, '#0000c8'],
  [1823, 728, '#000'], [2074, 728, '#000'], [2074, 979, '#000'],
  [1133, 979, '#000'], [1509, 979, '#0000c8'], [1823, 979, '#000'],
  [1509, 1230, '#000'], [1823, 1230, '#000'],
];

/**
 * 3D view: suspension parts behind, open sketch on top
 */
function Viewport() {
  return (
    <svg viewBox="332 225 2228 1333" preserveAspectRatio="xMinYMin slice" className="absolute inset-0 size-full" fill="none">
      <defs>
        <linearGradient id="band" gradientUnits="userSpaceOnUse" x1="0" y1="735" x2="0" y2="830">
          <stop offset="0" stopColor="#ededed" />
          <stop offset="0.55" stopColor="#ffffff" />
          <stop offset="1" stopColor="#eeeeee" />
        </linearGradient>
        <linearGradient id="bandLeft" gradientUnits="userSpaceOnUse" x1="0" y1="745" x2="0" y2="830">
          <stop offset="0" stopColor="#f4f2f2" />
          <stop offset="1" stopColor="#eeeeee" />
        </linearGradient>
        <linearGradient id="corner" gradientUnits="userSpaceOnUse" x1="0" y1="728" x2="0" y2="810">
          <stop offset="0" stopColor="#f0f0f0" />
          <stop offset="1" stopColor="#e1e1e1" />
        </linearGradient>
        <linearGradient id="side" gradientUnits="userSpaceOnUse" x1="2210" y1="0" x2="2284" y2="0">
          <stop offset="0" stopColor="#fbfbfb" />
          <stop offset="1" stopColor="#e0e0e0" />
        </linearGradient>
        <linearGradient id="under" gradientUnits="userSpaceOnUse" x1="0" y1="1240" x2="0" y2="1315">
          <stop offset="0" stopColor="#f2f0ef" />
          <stop offset="1" stopColor="#e2e0de" />
        </linearGradient>
        <linearGradient id="neck" gradientUnits="userSpaceOnUse" x1="2290" y1="980" x2="2215" y2="1290">
          <stop offset="0" stopColor="#f4f4f4" />
          <stop offset="0.25" stopColor="#ffffff" />
          <stop offset="0.45" stopColor="#ffffff" />
          <stop offset="0.65" stopColor="#ececec" />
          <stop offset="1" stopColor="#e4e2e0" />
        </linearGradient>
        <linearGradient id="lens" gradientUnits="userSpaceOnUse" x1="2140" y1="1080" x2="2215" y2="1115">
          <stop offset="0" stopColor="#f0efee" />
          <stop offset="1" stopColor="#f8f7f6" />
        </linearGradient>
        <linearGradient id="fold" gradientUnits="userSpaceOnUse" x1="2170" y1="1130" x2="2250" y2="1160">
          <stop offset="0" stopColor="#f4f3f2" />
          <stop offset="1" stopColor="#e2e0df" />
        </linearGradient>
        <linearGradient id="cap" gradientUnits="userSpaceOnUse" x1="2430" y1="890" x2="2261" y2="1520">
          <stop offset="0" stopColor="#fbe2c9" />
          <stop offset="0.12" stopColor="#ffe8d0" />
          <stop offset="0.23" stopColor="#ffffe6" />
          <stop offset="0.3" stopColor="#ffffe0" />
          <stop offset="0.42" stopColor="#fce6cc" />
          <stop offset="0.7" stopColor="#ecdccb" />
          <stop offset="1" stopColor="#e5d8c9" />
        </linearGradient>
      </defs>

      {/* Arm */}
      <path d="M1509 754L2560 726V1300L2240 1301 1509 1318z" fill="#f2f1f1" />
      <path d="M1509 754L2560 726V803L1509 830z" fill="url(#band)" />
      <path d="M1509 754L2074 739V816L1509 830z" fill="url(#bandLeft)" />
      <path d="M2211 737L2300 733V990L2217 953z" fill="url(#side)" />
      <path d="M2284 1000L2278 810C2278 760 2300 733 2345 732L2560 726V1300H2300z" fill="url(#corner)" />
      <path d="M1509 1245L1823 1236 2126 1249 2250 1280 2240 1301 1509 1318z" fill="url(#under)" />
      <path d="M2211 737L2217 953M2284 990L2278 810C2278 760 2300 733 2345 732" stroke="#c4c4c4" strokeWidth="1.500" />
      <path d="M2026 816L2560 803M1670 1239L1823 1236" stroke="#c0c0c0" strokeWidth="1.500" />
      <path d="M1509 754L2560 726M1509 1318L2240 1301" stroke="#b0b0b0" strokeWidth="1.500" />
      <path d="M1509 754L2560 726M1509 1318L2240 1301" stroke="#777" strokeWidth="1.500" strokeDasharray="30 24" />
      <path d="M2225 1286v15" stroke="#aaa" strokeWidth="1.500" />

      {/* Cross tube */}
      <rect x="944" y="790" width="752" height="502" rx="125" fill="#eeedec" stroke="#9a9a9a" strokeWidth="1.500" />

      {/* Shock mount */}
      <path
        d="M1823 728A251 251 0 0 0 1572 979A251 251 0 0 0 1823 1230L2126 1249L2233 968L2026 816C1960 765 1900 728 1823 728z"
        fill="#f6f5f5"
        stroke="#b5b5b5"
        strokeWidth="1.500"
      />
      <path d="M2231 965L2345 1008 2240 1301 2126 1249z" fill="url(#neck)" />
      <path d="M2126 1249C2125 1150 2160 1040 2220 959L2233 976C2228 1060 2185 1160 2126 1249z" fill="url(#lens)" />
      <path d="M2126 1249C2185 1160 2222 1060 2233 976L2258 1060 2195 1240z" fill="url(#fold)" />
      <path d="M2126 1249C2125 1150 2160 1040 2220 959M2126 1249C2185 1160 2225 1060 2233 976L2268 1040M2286 987L2184 1269M2126 1249L2195 1240" stroke="#bfc1c2" strokeWidth="1.500" />

      {/* Spring and its cap */}
      <path
        d="M2380 915Q2386 898 2405 903L2487 932Q2502 936 2510 922L2560 785V1558H2281L2313 1464Q2318 1448 2302 1440L2221 1411Q2204 1405 2209 1386z"
        fill="url(#cap)"
      />
      <path d="M2385 925L2222 1370M2512 935L2322 1450" stroke="#d8cbbf" strokeWidth="14" opacity="0.500" />
      <path d="M2405 903L2220 1411M2488 932L2303 1440M2532 930L2299 1558M2560 1466L2527 1558M2560 1528L2548 1558" stroke="#d3b48f" strokeWidth="1.800" />
      <path d="M2380 915L2209 1386M2560 785L2315 1457L2281 1558" stroke="#8a7a68" strokeWidth="1.800" strokeDasharray="3 1" />

      {/* Upright */}
      <rect x="1133" y="790" width="376" height="768" fill="#f8f6f0" />
      <path d="M1133 979v579M1509 1230v328" stroke="#c4c4c4" strokeWidth="2" />

      {/* Sketch region */}
      <path d="M1509 477H1823A251 251 0 0 1 2074 728V979A251 251 0 0 1 1823 1230H1509z" fill="#64737f" opacity="0.180" />
      <rect x="1133" y="477" width="376" height="502" fill="#c369d5" />
      <circle cx="1321" cy="602" r="35" fill="#e1e4e7" stroke="#222" strokeWidth="2" />
      <circle cx="1321" cy="853" r="35" fill="#d8dadb" stroke="#222" strokeWidth="2" />

      {/* Front plane */}
      <path d="M379 1560V790H2263V1560z" fill="#488abc" fillOpacity="0.060" />
      <path d="M379 1560V790H2263V1560" stroke="#3f7cc0" strokeOpacity="0.400" strokeWidth="3" />
      <path d="M1321 790V1558" stroke="#3a6fb4" strokeOpacity="0.600" strokeWidth="3" />
      <rect x="756" y="410" width="1130" height="635" stroke="#93d2f3" strokeOpacity="0.800" strokeWidth="2" />

      {/* Sketch geometry */}
      <g stroke="#161616" strokeWidth="3">
        <path d="M1133 979V477H1823M1509 477V1230H1823M1133 979H1823M2074 728V979A251 251 0 0 1 1823 1230" />
        <circle cx="1823" cy="728" r="251" />
        <circle cx="1823" cy="979" r="125" />
      </g>
      <circle cx="1321" cy="602" r="4" fill="#fff" stroke="#111" strokeWidth="3" />
      <circle cx="1321" cy="853" r="4" fill="#fff" stroke="#2020d0" strokeWidth="3" />

      {/* Dimensions */}
      <path d="M1321 612v41M1355 612v41M1321 652h34M2058 519l-47 41" stroke="#161616" strokeWidth="1.800" />
      <path d="M1321 652l24-6v12zM2011 560l9-17 10 8z" fill="#000" />
      <text x="1340" y="661" fontSize="23" fill="#222" stroke="#222" strokeWidth="0.6" fontFamily="Liberation Sans, sans-serif">2.75</text>
      <text x="2056" y="508" fontSize="24" fontWeight="500" fill="#333" fontFamily="Roboto, sans-serif">Ø40</text>

      {/* Leader lines from markers to geometry */}
      <path
        d="M1115 461l18 16M1321 450v26M1486 455l23 22M1310 592l8 8M1118 729h14M1310 842l8 8M1496 854h13M1108 956l25 23M1321 952v26M1486 956l23 23M1666 478v26M1813 468l10 9M1813 719l9 9M2057 713l17 15M2074 854h13M2063 969l11 9M2000 1158l16 14M1499 1219l10 10M1812 1219l10 10M1666 1231v26M1800 956l22 22"
        stroke="#a9b4be"
        strokeWidth="2"
      />
      {POINTS.map(([x, y, fill]) => (
        <circle key={`${x}-${y}`} cx={x} cy={y} r="4.500" fill={fill} />
      ))}
      {MARKERS.map(([type, x, y, bg]) => (
        <g key={`${x}-${y}`} transform={`translate(${x} ${y})`} stroke={INK}>
          <rect x="-13" y="-13" width="27" height="27" fill={bg === 'b' ? '#dceffa' : '#ffffff'} stroke="none" />
          {MARKER_SHAPES[type]}
        </g>
      ))}

      <text x="765" y="442" fontSize="26" fontWeight="500" fill="#8cc9ea" fontFamily="Roboto, sans-serif">Sketch 1</text>
      <text x="381" y="816" fontSize="26" fontWeight="500" fill="#4169c4" fontFamily="Roboto, sans-serif">Front</text>
    </svg>
  );
}

function ViewCube() {
  return (
    <div className="absolute top-5 right-0">
      <svg viewBox="2320 245 240 215" className="w-60" fill="none">
        <g transform="translate(2160 220) scale(0.3333)">
          <g fill="#e2e9ef">
            <path d="M835 77l30 39h-60zM835 683l30-40h-60zM531 379l41-30v60zM1139 379l-40-30v60z" />
            <path d="M747 108l6 22c-40 14-70 34-98 64l6 12-43 8 1-49 16 12c34-36 72-58 112-69zM923 108l-6 22c40 14 70 34 98 64l-6 12 43 8-1-49-16 12c-34-36-72-58-112-69z" />
            <path d="M763 264H907c2 26 18 42 44 43V452c-26 2-42 18-44 43H763c-2-26-18-42-44-43V307c26-2 42-18 44-43z" />
          </g>
          <rect x="746" y="291" width="178" height="178" rx="45" fill="#fff" />
          <path d="M711 264V503" stroke="#5454e0" strokeWidth="5" />
          <path d="M709 503H951" stroke="#e04040" strokeWidth="5" />
        </g>
        <text x="2438" y="353" fontSize="18" textAnchor="middle" fill="#222">Front</text>
        <text x="2397" y="301" fontSize="19" fontWeight="500" textAnchor="middle" fill="#2a2ae0">Z</text>
        <text x="2490" y="394" fontSize="19" fontWeight="500" textAnchor="middle" fill="#e03030">X</text>
        <g stroke="#333" strokeWidth="1.500">
          <path d="M2488 427l12-4 12 4-12 5z" fill="#fff" />
          <path d="M2488 427l12 5v15l-12-6z" fill="#a5a5a5" />
          <path d="M2512 427l-12 5v15l12-6z" fill="#d8d8d8" />
        </g>
        <path d="M2523 433h10l-5 5z" fill="#333" />
      </svg>
    </div>
  );
}

function SideButtons() {
  return (
    <div className="absolute top-[565px] right-0 flex w-11 flex-col border border-r-0 border-[#999] bg-white">
      <button aria-label="Appearance" className="flex h-11 items-center justify-center border-b border-[#999]">
        <Icon width={1.200}>
          <path d="M4 15l8-13 7 4-6 12z" fill="#777" />
          <path d="M8 18l15-10 4 6-12 8z" fill="#aaa" />
          <path d="M1 18h26v7H1zM10 18v7M18 18v7" fill="#fff" />
          <circle cx="5" cy="21.500" r="1.200" />
        </Icon>
      </button>
      <button aria-label="Configurations" className="flex h-[45px] items-center justify-center border-b border-[#999]">
        <Icon width={1.600}>
          <path d="M7 12l10-5 10 5v9l-10 6-10-6zM7 12l10 5 10-5M17 17v10" fill="#fff" />
          <path d="M1 2h13v10H1z" fill="#3b7de0" stroke={BLUE} strokeWidth="1.200" />
          <path d="M1 5.500h13M1 9h13M5.500 2v10M10 2v10" stroke="#fff" strokeWidth="1" />
        </Icon>
      </button>
      <button aria-label="Configured properties" className="flex h-[45px] items-center justify-center border-b border-[#999]">
        <Icon width={1.600}>
          <path d="M8 13l7-3 7 3v7l-7 4-7-4zM8 13l7 4 7-4M15 17v7" fill="#fff" />
          <path d="M5 11c-3 1-1 5-4 6 3 1 1 6 4 8M23 8c4 1 1 6 4 8-3 1 0 7-4 8" />
          <path d="M1 2h13v9H1z" fill={INK} strokeWidth="1" />
          <path d="M1 5h13M1 8h13M5.500 2v9M10 2v9" stroke="#fff" strokeWidth="0.800" />
        </Icon>
      </button>
      <button aria-label="Variable table" className="flex h-[43px] items-center justify-center">
        <Icon width={2.400}>
          <path d="M4 11c-3 4-3 9 0 13M24 7c4 5 4 12 0 17" />
          <path d="M10 12c4-2 5 1 6 5s3 5 5 3M21 11c-4 0-7 11-12 10" strokeWidth="2.800" />
          <path d="M1 2h13v9H1z" fill={INK} strokeWidth="1" />
          <path d="M1 5h13M1 8h13M5.500 2v9M10 2v9" stroke="#fff" strokeWidth="0.800" />
        </Icon>
      </button>
    </div>
  );
}

function MeasureTools() {
  return (
    <div className="absolute right-0 bottom-0 flex h-10 w-[149px] items-center justify-between bg-white/75 px-4">
      <button aria-label="Measure">
        <Icon className="size-6" width={1.600}>
          <path d="M2 17h12V11c0-7 12-7 12 0v9l-4 5H2z" />
          <ellipse cx="20" cy="10" rx="6" ry="4" />
          <ellipse cx="20" cy="10" rx="2.500" ry="1.500" />
          <path d="M6 25v-4M10 25v-4M14 25v-4M18 25v-4" />
        </Icon>
      </button>
      <button aria-label="Angle">
        <Icon className="size-7" width={1.800}>
          <path d="M2 23v-4a12 12 0 0 1 24 0v4z" />
          <path d="M9 20a5 5 0 0 1 10 0z" strokeWidth="1.400" />
          <path d="M5 19a9 9 0 0 1 18 0" strokeWidth="2" strokeDasharray="1 2" />
        </Icon>
      </button>
      <button aria-label="Mass properties">
        <Icon className="size-6" width={1.600}>
          <path d="M3 5h22M14 2v21M3 25h22M6 5L2 17h9L7 5M21 5l-4 12h9L22 5" />
          <path d="M2 17h9v2H2zM17 17h9v2h-9z" fill={INK} />
        </Icon>
      </button>
    </div>
  );
}

const DOC_TABS = [
  ['assembly', 'Main Assembly'],
  ['partStudio', 'Part Studio 1'],
  ['folder', 'Part'],
  ['folder', 'Assembly'],
];

function DocumentTabs() {
  return (
    <footer className="flex h-10 items-start gap-[3px] bg-[#d5d5d5] text-[19px] text-[#666]">
      <button aria-label="Add tab" className="flex h-[38px] w-[50px] items-center justify-center pr-1.5">
        <Icon className="size-5" box="0 0 20 20" color="#555" width={3}>
          <path d="M10 0v20M0 10h20" />
        </Icon>
      </button>
      {DOC_TABS.map(([icon, name]) => (
        <button
          key={name}
          className={`flex h-[37px] w-[270px] items-center gap-1 rounded-b-lg pl-3.5 ${
            name === 'Part Studio 1' ? 'border-b-2 border-[#1651b0] bg-white text-[#333]' : 'bg-[#e9e9e9]'
          }`}
        >
          <Icon className="size-6">{ICONS[icon]}</Icon>
          {name}
        </button>
      ))}
    </footer>
  );
}

export default function App() {
  return (
    <div className="flex min-h-screen flex-col overflow-hidden border-b-2 border-[#1f1e25] bg-white font-[Roboto,sans-serif]">
      <div className="font-['Open_Sans',sans-serif]">
        <TabStrip />
        <AddressBar />
      </div>
      <DocumentHeader />
      <div className="flex flex-1">
        <Rail />
        <div className="flex min-w-0 flex-1 flex-col">
          <Toolbar />
          <div className="flex flex-1">
            <FeaturePanel />
            <main className="relative min-w-0 flex-1 overflow-hidden">
              <Viewport />
              <SketchDialog />
              <ContextBanner />
              <ViewCube />
              <button
                aria-label="Toggle feature list"
                className="absolute top-[632px] left-0 flex h-[46px] w-[43px] items-center justify-center border border-l-0 border-[#ccc] bg-white"
              >
                <Icon className="size-[26px]" box="0 0 26 26" width={1.800}>
                  <path d="M1 2h24M10 9h15M10 16h15M6 23h19M2 5l3 4 3-4M2 13l3 4 3-4" />
                </Icon>
              </button>
              <SideButtons />
              <MeasureTools />
            </main>
          </div>
          <DocumentTabs />
        </div>
      </div>
    </div>
  );
}
